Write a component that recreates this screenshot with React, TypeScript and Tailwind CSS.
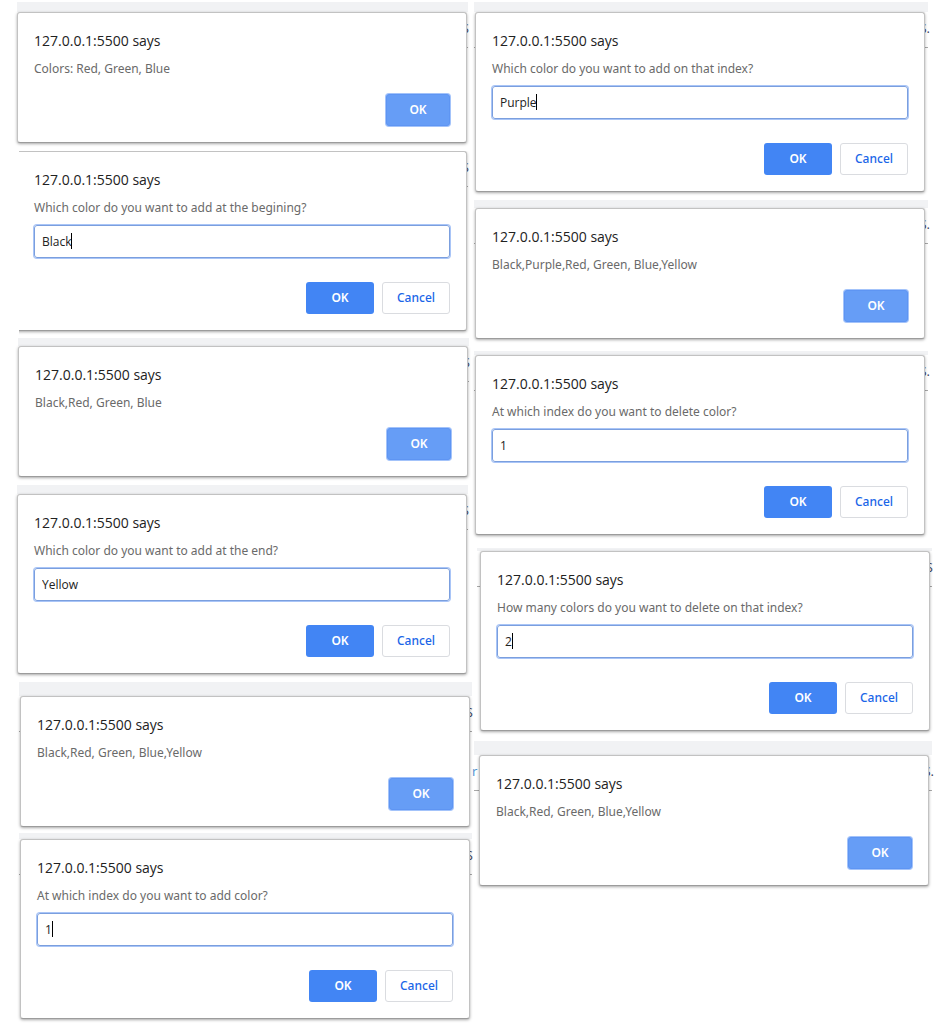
import { useId } from "react";
import clsx from "clsx";

type Dialog = {
  message: string;
  value?: string;
  /** Place of the text caret inside the field, when it is showing. */
  caret?: string;
  /** Gap above the tile. */
  gap: string;
  /** Height of the page header strip that shows above the dialog. */
  strip: string;
  /** Horizontal margins of the dialog inside its tile. */
  inset: string;
  /** Horizontal extent of the page behind the dialog. */
  page: string;
  /** Trailing page text that peeks out on the right. */
  tail: string;
  /** Leading page text that peeks out on the left. */
  head?: string;
  openLeft?: boolean;
};

const left: Dialog[] = [
  { message: "Colors: Red, Green, Blue", gap: "mt-[2px]", strip: "h-[10px]", inset: "ml-[1px] mr-[7px]", page: "left-[1px] right-[6px]", tail: "S" },
  { message: "Which color do you want to add at the begining?", value: "Black", caret: "left-[37px]", gap: "mt-[8px]", strip: "h-0", inset: "ml-[1px] mr-[7px]", page: "left-[3px] right-[6px]", tail: "S", openLeft: true },
  { message: "Black,Red, Green, Blue", gap: "mt-[7px]", strip: "h-[8px]", inset: "ml-[2px] mr-[6px]", page: "left-[2px] right-[5px]", tail: "S" },
  { message: "Which color do you want to add at the end?", value: "Yellow", gap: "mt-[8px]", strip: "h-[9px]", inset: "ml-[1px] mr-[7px]", page: "left-[1px] right-[6px]", tail: "S" },
  { message: "Black,Red, Green, Blue,Yellow", gap: "mt-[8px]", strip: "h-[14px]", inset: "ml-[4px] mr-[4px]", page: "left-[3px] right-[2px]", tail: "S" },
  { message: "At which index do you want to add color?", value: "1", caret: "left-[15px]", gap: "mt-[6px]", strip: "h-[6px]", inset: "ml-[4px] mr-[4px]", page: "left-[3px] right-[2px]", tail: "S" },
];

const right: Dialog[] = [
  { message: "Which color do you want to add on that index?", value: "Purple", caret: "left-[44px]", gap: "mt-[2px]", strip: "h-[10px]", inset: "ml-[1px] mr-[7px]", page: "left-0 right-[4px]", tail: "S." },
  { message: "Black,Purple,Red, Green, Blue,Yellow", gap: "mt-[8px]", strip: "h-[8px]", inset: "ml-[1px] mr-[7px]", page: "left-0 right-[4px]", tail: "S." },
  { message: "At which index do you want to delete color?", value: "1", gap: "mt-[12px]", strip: "h-[4px]", inset: "ml-[1px] mr-[7px]", page: "left-0 right-[4px]", tail: "S." },
  { message: "How many colors do you want to delete on that index?", value: "2", caret: "left-[15px]", gap: "mt-[13px]", strip: "h-[3px]", inset: "ml-[6px] mr-[2px]", page: "left-[3px] right-0", tail: "S" },
  { message: "Black,Red, Green, Blue,Yellow", gap: "mt-[10px]", strip: "h-[14px]", inset: "ml-[5px] mr-[3px]", page: "left-0 right-0", tail: "S.", head: "r" },
];

function Tile({ dialog }: { dialog: Dialog }) {
  const id = useId();
  const { message, value, caret, gap, strip, inset, page, tail, head, openLeft } = dialog;
  const isPrompt = value !== undefined;

  return (
    <div className={clsx("relative", gap)}>
      <div className={clsx("absolute inset-y-0", page)}>
        <div className={clsx("bg-[#f1f2f4]", strip)} />
        <div className="h-9 border-b border-[#a8a8a8]">
          <div
            className={clsx(
              "flex h-8 items-center justify-between font-['Open_Sans',sans-serif] text-[13px] leading-4 text-[#3b3f5c]",
              tail === "S." ? "-mr-[2px]" : "-mr-[1px]",
            )}
          >
            <span className="-ml-[2px] text-[#4a90d0]">{head}</span>
            <span>{tail}</span>
          </div>
        </div>
      </div>
      <div className={strip} />
      <section
        className={clsx(
          "relative rounded-[3px] border border-[#c2c2c2] border-b-[#9c9c9c] bg-white p-4 shadow-[0_1px_3px_rgba(0,0,0,0.35)]",
          inset,
          openLeft && "rounded-l-none border-l-transparent [clip-path:inset(0_-4px_-4px_2px)]",
        )}
      >
        <h2 className="font-['Open_Sans',sans-serif] text-[14px] leading-6 text-[#222222]">127.0.0.1:5500 says</h2>
        {isPrompt ? (
          <>
            <label htmlFor={id} className="mt-[6px] block text-[12px] leading-5 text-[#6a6a6a]">
              {message}
            </label>
            <div className="relative mt-[7px]">
              <input
                id={id}
                type="text"
                defaultValue={value}
                className="block h-[33px] w-full rounded-[3px] border border-[#7b9fde] px-[7px] font-['Open_Sans',sans-serif] text-[12px] text-[#222222] shadow-[0_0_0_1px_#a9c5f7] outline-none"
              />
              {caret && <span className={clsx("absolute top-2 h-4 w-px bg-black", caret)} />}
            </div>
            <div className="mt-[24px] flex justify-end gap-2">
              <button className="h-8 w-[68px] rounded-[3px] bg-[#4285f4] text-[12px] font-semibold text-white">OK</button>
              <button className="h-8 w-[68px] rounded-[3px] border border-[#dadce0] bg-white text-[12px] font-medium text-[#1a66e8]">
                Cancel
              </button>
            </div>
          </>
        ) : (
          <>
            <p className="mt-[6px] text-[12px] leading-5 text-[#6a6a6a]">{message}</p>
            <div className="mt-[15px] flex justify-end">
              <button className="h-8 w-16 rounded-[3px] border border-[#5e95f3] bg-[#669df6] text-[12px] font-semibold text-white shadow-[0_0_0_1px_#a3c3fa]">
                OK
              </button>
            </div>
          </>
        )}
      </section>
    </div>
  );
}

export default function App() {
  return (
    <main className="flex min-h-screen bg-white pr-[3px] pb-[5px] pl-4 font-['Noto_Sans',sans-serif]">
      {[left, right].map((column, i) => (
        <div key={i} className="flex min-w-0 flex-1 flex-col">
          {column.map((dialog, j) => (
            <Tile key={j} dialog={dialog} />
          ))}
        </div>
      ))}
    </main>
  );
}
